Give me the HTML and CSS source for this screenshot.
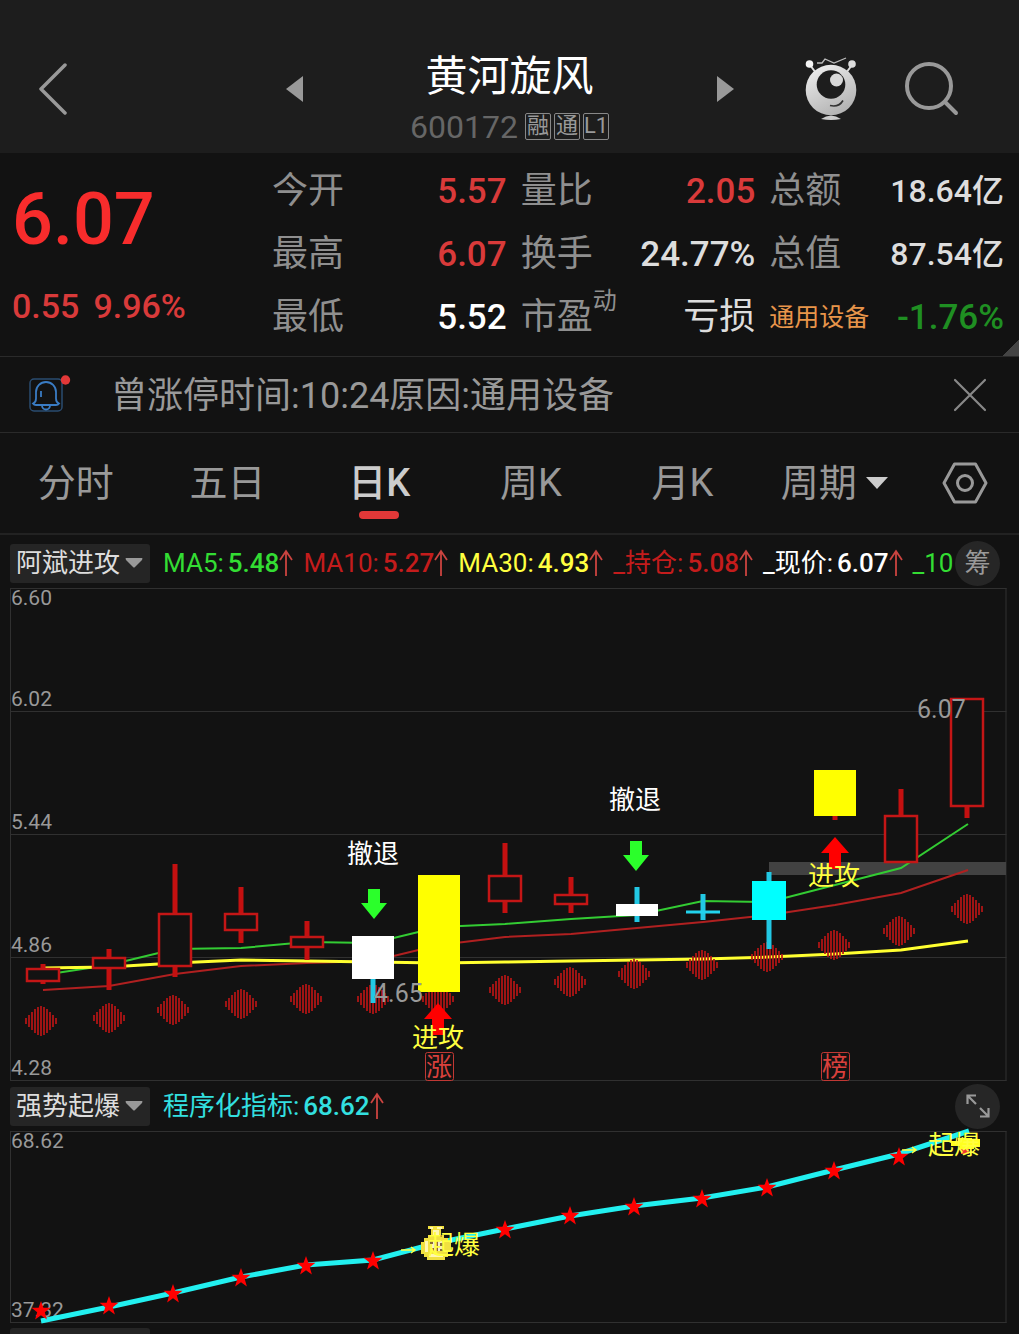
FILE: index.html
```
<!doctype html>
<html lang="zh-CN">
<head>

  <meta charset="utf-8">
  <meta name="viewport" content="width=device-width, initial-scale=1">

  <title>黄河旋风 600172</title>

  <link rel="stylesheet" href="styles.css">

</head>
<body>

  <header class="topbar">
    <button class="icon-btn back" aria-label="返回">
      <svg width="30" height="52" viewBox="0 0 30 52"><path d="M27 2 3 26 27 50" fill="none" stroke="#999" stroke-width="3.5" stroke-linecap="round" stroke-linejoin="round"/></svg>
    </button>
    <div class="stock">
      <button class="icon-btn" aria-label="上一只">
        <svg width="18" height="28" viewBox="0 0 18 28"><path d="M0 14 17 1V27z" fill="#999"/></svg>
      </button>
      <div class="stock-name">
        <h1>黄河旋风</h1>
        <p><span class="code">600172</span><span class="tag">融</span><span class="tag">通</span><span class="tag">L1</span></p>
      </div>
      <button class="icon-btn" aria-label="下一只">
        <svg width="18" height="28" viewBox="0 0 18 28"><path d="M18 14 1 1V27z" fill="#999"/></svg>
      </button>
    </div>
    <div class="tools">
      <button class="icon-btn" aria-label="助手">
        <svg width="52" height="66" viewBox="0 0 52 66">
          <defs>
            <linearGradient id="face" x1="0" y1="0" x2="0.5" y2="1">
              <stop offset="0" stop-color="#f2f2f2"/>
              <stop offset="1" stop-color="#b5b5b5"/>
            </linearGradient>
          </defs>
          <path d="M5 9 11 17M47 9 41 17" stroke="#ddd" stroke-width="2"/>
          <circle cx="4.5" cy="8" r="3.8" fill="#f4f4f4"/>
          <circle cx="47" cy="8" r="3.8" fill="#ddd"/>
          <path d="M12 7h5l3-4 9 4 12-5" fill="none" stroke="#bbb" stroke-width="1.3"/>
          <circle cx="26" cy="34" r="25.3" fill="url(#face)"/>
          <circle cx="26" cy="28.5" r="14.3" fill="#1d1d1d"/>
          <circle cx="31.5" cy="24" r="6.5" fill="#d8d8d8"/>
          <path d="M25 49.5q9 2 13-5" fill="none" stroke="#333" stroke-width="1.6"/>
          <path d="M16 63q10-7 20 0-10 2-20 0z" fill="#ccc"/>
        </svg>
      </button>
      <button class="icon-btn" aria-label="搜索">
        <svg width="54" height="54" viewBox="0 0 54 54"><circle cx="24" cy="24" r="22" fill="none" stroke="#999" stroke-width="4"/><path d="M40 40 51 51" stroke="#999" stroke-width="4" stroke-linecap="round"/></svg>
      </button>
    </div>
  </header>

  <section class="quote">
    <div class="price">
      <strong>6.07</strong>
      <p><span>0.55</span><span>9.96%</span></p>
    </div>
    <dl>
      <div><dt>今开</dt><dd class="up">5.57</dd></div>
      <div><dt>最高</dt><dd class="up">6.07</dd></div>
      <div><dt>最低</dt><dd class="white">5.52</dd></div>
    </dl>
    <dl>
      <div><dt>量比</dt><dd class="up">2.05</dd></div>
      <div><dt>换手</dt><dd>24.77%</dd></div>
      <div><dt>市盈<sup>动</sup></dt><dd class="loss">亏损</dd></div>
    </dl>
    <dl>
      <div><dt>总额</dt><dd class="amount">18.64亿</dd></div>
      <div><dt>总值</dt><dd class="amount">87.54亿</dd></div>
      <div><dt class="sector">通用设备</dt><dd class="down">-1.76%</dd></div>
    </dl>
  </section>

  <section class="notice">
    <svg width="42" height="42" viewBox="0 0 42 42">
      <rect x="1" y="5" width="32" height="32" rx="4" fill="none" stroke="#2a4c70" stroke-width="1.5"/>
      <path d="M4 29.5q3-1 3-5V18a10 10 0 0 1 20 0v6.5q0 4 3 5-1 1.5-3 1.5H7q-2 0-3-1.5zM13 31.5a4 4 0 0 0 8 0M12 17v6" fill="none" stroke="#3a7cc4" stroke-width="1.8"/>
      <circle cx="36.5" cy="6" r="4.7" fill="#e23838"/>
    </svg>
    <p>曾涨停时间:10:24原因:通用设备</p>
    <button class="icon-btn" aria-label="关闭">
      <svg width="34" height="34" viewBox="0 0 34 34"><path d="M2 2 32 32M32 2 2 32" stroke="#888" stroke-width="2.2" stroke-linecap="round"/></svg>
    </button>
  </section>

  <nav class="tabs">
    <a href="#">分时</a>
    <a href="#">五日</a>
    <a href="#" class="active">日K</a>
    <a href="#">周K</a>
    <a href="#">月K</a>
    <label class="period">
      <select aria-label="周期"><option>周期</option></select>
      <svg width="22" height="12" viewBox="0 0 22 12"><path d="M0 0H22L11 12z" fill="#ccc"/></svg>
    </label>
    <button class="icon-btn" aria-label="设置">
      <svg width="46" height="42" viewBox="0 0 46 42"><path d="M12.5 2h21L44 21 33.5 40h-21L2 21z" fill="none" stroke="#999" stroke-width="3" stroke-linejoin="round"/><circle cx="23" cy="21" r="7.5" fill="none" stroke="#999" stroke-width="3"/></svg>
    </button>
  </nav>

  <svg class="defs" width="0" height="0">
    <symbol id="rise" viewBox="0 0 14 28"><path d="M7 27V2M1 11 7 2 13 11" fill="none" stroke="#cc4440" stroke-width="1.8"/></symbol>
    <symbol id="caret" viewBox="0 0 18 12"><path d="M1 1H17Q18 1 17 3L10 10Q9 11 8 10L1 3Q0 1 1 1z" fill="#999"/></symbol>
  </svg>

  <section class="panel main-panel">
    <div class="panel-head">
      <label class="picker">
        <select aria-label="主图指标"><option>阿斌进攻</option></select>
        <svg width="18" height="12"><use href="#caret"/></svg>
      </label>
      <ul class="values">
        <li class="lime"><span>MA5:</span><b>5.48</b><svg width="14" height="28"><use href="#rise"/></svg></li>
        <li class="red"><span>MA10:</span><b>5.27</b><svg width="14" height="28"><use href="#rise"/></svg></li>
        <li class="yellow"><span>MA30:</span><b>4.93</b><svg width="14" height="28"><use href="#rise"/></svg></li>
        <li class="red"><span>_持仓:</span><b>5.08</b><svg width="14" height="28"><use href="#rise"/></svg></li>
        <li class="white"><span>_现价:</span><b>6.07</b><svg width="14" height="28"><use href="#rise"/></svg></li>
        <li class="lime"><span>_10</span></li>
      </ul>
      <button class="round">筹</button>
    </div>

    <svg class="chart" viewBox="0 588 1019 493">
      <defs>
        <path id="diamond" d="M-15-3V3M-12-6V6M-9-9V9M-6-12V12M-3-14V14M0-15V15M3-14V14M6-12V12M9-9V9M12-6V6M15-3V3"/>
        <path id="arrow-down" d="M-6-15H6V-1H13L0 15-13-1H-6z" fill="#2bff2b"/>
        <path id="arrow-up" d="M0-16 14 0H6V16H-6V0H-14z" fill="#f00"/>
      </defs>

      <path class="grid" d="M10.5 588.5H1006.5M10.5 711.5H1006.5M10.5 834.5H1006.5M10.5 957.5H1006.5M10.5 1080.5H1006.5M10.5 588V1081M1006 588V1081"/>
      <rect x="769" y="862" width="237" height="13" fill="#424242"/>

      <!-- moving averages -->
      <polyline class="ma5" points="43,975 109,965 175,949 241,948 307,942 373,943 439,927 505,924 571,919 637,915 703,901 769,902 835,885 901,868 968,824"/>
      <polyline class="ma10" points="43,990 109,986 175,974 241,966 307,963 373,961 439,945 505,937 571,934 637,928 703,922 769,915 835,905 901,893 968,870"/>
      <polyline class="ma30" points="43,968 109,967 175,963 241,960 307,961 373,962 439,963 505,962 571,961 637,960 703,959 769,957 835,954 901,950 968,941"/>

      <g class="diamonds">
        <use href="#diamond" x="41" y="1021"/>
        <use href="#diamond" x="109" y="1018"/>
        <use href="#diamond" x="173" y="1010"/>
        <use href="#diamond" x="241" y="1004"/>
        <use href="#diamond" x="306" y="999"/>
        <use href="#diamond" x="373" y="999"/>
        <use href="#diamond" x="438" y="999"/>
        <use href="#diamond" x="505" y="990"/>
        <use href="#diamond" x="570" y="982"/>
        <use href="#diamond" x="634" y="974"/>
        <use href="#diamond" x="702" y="965"/>
        <use href="#diamond" x="767" y="957"/>
        <use href="#diamond" x="834" y="945"/>
        <use href="#diamond" x="899" y="931"/>
        <use href="#diamond" x="967" y="909"/>
      </g>

      <!-- candles -->
      <path class="wick" d="M43 964V984M109 949V990M175 864V977M241 887V943M307 921V960M505 843V913M571 877V913M835 815V820M901 789V816M967 805V818"/>
      <g class="hollow">
        <rect x="27" y="969" width="32" height="12"/>
        <rect x="93" y="958" width="32" height="10"/>
        <rect x="159" y="914" width="32" height="52"/>
        <rect x="225" y="914" width="32" height="16"/>
        <rect x="291" y="937" width="32" height="10"/>
        <rect x="489" y="876" width="32" height="25"/>
        <rect x="555" y="895" width="32" height="9"/>
        <rect x="885" y="816" width="32" height="46"/>
        <rect x="951" y="699" width="32" height="107"/>
      </g>
      <path class="wick cyan" d="M373 979V1003M637 887V922M703 894V920M769 872V949"/>
      <path d="M686 912H720" stroke="#22d3ee" stroke-width="3"/>
      <rect x="752" y="881" width="34" height="39" fill="#0ff"/>
      <rect x="352" y="936" width="42" height="43" fill="#fff"/>
      <rect x="616" y="904" width="42" height="12" fill="#fff"/>
      <rect x="418" y="875" width="42" height="117" fill="#ff0"/>
      <rect x="814" y="770" width="42" height="46" fill="#ff0"/>

      <!-- signals -->
      <use href="#arrow-down" x="374" y="904"/>
      <use href="#arrow-down" x="636" y="856"/>
      <use href="#arrow-up" x="438" y="1019"/>
      <use href="#arrow-up" x="835" y="853"/>
      <g class="signal" text-anchor="middle">
        <text x="373" y="863" fill="#fff">撤退</text>
        <text x="635" y="809" fill="#fff">撤退</text>
        <text x="438" y="1047" fill="#ffff40">进攻</text>
        <text x="834" y="885" fill="#ffff40">进攻</text>
        <text x="439" y="1076" fill="#d9403c">涨</text>
        <text x="835" y="1076" fill="#d9403c">榜</text>
      </g>
      <rect class="badge" x="425.5" y="1052.5" width="28" height="28" rx="2"/>
      <rect class="badge" x="821.5" y="1052.5" width="28" height="28" rx="2"/>

      <g class="axis">
        <text x="11" y="605">6.60</text>
        <text x="11" y="706">6.02</text>
        <text x="11" y="829">5.44</text>
        <text x="11" y="952">4.86</text>
        <text x="11" y="1075">4.28</text>
      </g>
      <g class="extreme">
        <text x="374" y="1002">4.65</text>
        <text x="917" y="718">6.07</text>
      </g>
    </svg>
  </section>

  <section class="panel">
    <div class="panel-head">
      <label class="picker">
        <select aria-label="副图指标"><option>强势起爆</option></select>
        <svg width="18" height="12"><use href="#caret"/></svg>
      </label>
      <ul class="values">
        <li class="aqua"><span>程序化指标:</span><b>68.62</b><svg width="14" height="28"><use href="#rise"/></svg></li>
      </ul>
      <button class="round" aria-label="全屏">
        <svg width="24" height="24" viewBox="0 0 24 24"><path d="M1.5 10V1.5H10M1.5 1.5 10 10M22.5 14V22.5H14M22.5 22.5 14 14" fill="none" stroke="#999" stroke-width="2.2"/></svg>
      </button>
    </div>

    <svg class="chart" viewBox="0 1131 1019 192">
      <defs>
        <path id="star" d="M0-10 2.4-3.2H9.5L3.8 1.2 5.9 8.5 0 4.2-5.9 8.5-3.8 1.2-9.5-3.2H-2.4z" fill="#f00"/>
        <g id="bag" shape-rendering="crispEdges">
          <path d="M-8-19H8V-16H5V-10H8V-7H12V-4H15V7H12V12H9V15H-9V12H-12V9H-15V-3H-12V-7H-8V-10H-5V-16H-8z" fill="#f0e040"/>
          <path d="M-6-18H-3V-16H-6zM1-18H6V-16H1zM-3-15H3V-10H-3zM-11-4H-8V7H-11zM-7 9H7V12H-7z" fill="#fff7b0"/>
          <path d="M-5-10H6V-8H-5z" fill="#b09428"/>
          <path d="M-6-4H7V6H-6z" fill="#f4ecc8"/>
          <path d="M-6-4H-3V-1H-6zM0-4H2V6H0zM4-2H7V1H4zM-5 3H-2V6H-5zM4 4H7V6H4z" fill="#8a6a38"/>
        </g>
      </defs>

      <path class="grid" d="M10.5 1131.5H1006.5M10.5 1322.5H1006.5M10.5 1131V1323M1006 1131V1323"/>
      <g class="axis">
        <text x="11" y="1148">68.62</text>
        <text x="11" y="1317">37.32</text>
      </g>
      <polyline class="power" points="41,1321 109,1307 173,1293 241,1277 306,1265 373,1260 437,1243 505,1229 570,1216 634,1206 702,1198 767,1187 834,1170 899,1154 969,1131"/>

      <use href="#star" x="41" y="1311"/>
      <use href="#star" x="109" y="1306"/>
      <use href="#star" x="173" y="1294"/>
      <use href="#star" x="241" y="1278"/>
      <use href="#star" x="306" y="1266"/>
      <use href="#star" x="373" y="1261"/>
      <use href="#star" x="505" y="1230"/>
      <use href="#star" x="570" y="1216"/>
      <use href="#star" x="634" y="1207"/>
      <use href="#star" x="702" y="1199"/>
      <use href="#star" x="767" y="1188"/>
      <use href="#star" x="834" y="1171"/>
      <use href="#star" x="899" y="1157"/>

      <use href="#bag" x="436" y="1245"/>
      <path d="M951 1141H958V1138H972V1139H980V1147H974V1149H960V1146H951z" fill="#ffff20"/>
      <path d="M961 1149H969V1154H961z" fill="#e33"/>
      <path d="M401 1250H415M411 1247 415 1250 411 1253M902 1150H916M912 1147 916 1150 912 1153" fill="none" stroke="#ffff40" stroke-width="1.5"/>
      <g class="signal" fill="#ffff40">
        <text x="428" y="1254">起爆</text>
        <text x="928" y="1154">起爆</text>
      </g>
    </svg>
  </section>

  <div class="next-panel"></div>

</body>
</html>
```
FILE: styles.css
```
* {
  box-sizing: border-box;
}

html, body {
  height: 100%;
}

body {
  margin: 0;
  overflow: hidden;
  background-color: #121212;
  color: #999;
  font-family: Roboto, "Noto Sans CJK SC", sans-serif;
}

h1, p, dl, dd, ul {
  margin: 0;
  padding: 0;
}

svg {
  display: block;
  flex: none;
}

.defs {
  position: absolute;
}

button, select {
  margin: 0;
  padding: 0;
  border: none;
  background: none;
  color: inherit;
  font: inherit;
  appearance: none;
}

.icon-btn {
  display: flex;
  align-items: center;
  justify-content: center;
}

/* top bar */

.topbar {
  display: grid;
  grid-template-columns: 1fr 448px 1fr;
  align-items: center;
  height: 153px;
  padding-top: 24px;
  background-color: #1d1d1d;
}

.back {
  justify-self: start;
  margin-left: 38px;
}

.stock {
  display: flex;
  align-items: center;
  justify-content: space-between;
}

.stock-name {
  padding-top: 20px;
  text-align: center;
}

.stock-name h1 {
  color: #fff;
  font-size: 42px;
  font-weight: 400;
  line-height: 56px;
}

.stock-name p {
  display: flex;
  align-items: center;
  justify-content: center;
  gap: 3px;
  height: 44px;
}

.code {
  margin-right: 4px;
  color: #666;
  font-size: 32px;
}

.tag {
  width: 26px;
  height: 27px;
  border: 1px solid #888;
  border-radius: 2px;
  font-size: 22px;
  line-height: 24px;
}

.tools {
  display: flex;
  align-items: center;
  justify-content: flex-end;
  gap: 48px;
  padding-right: 60px;
}

/* quote */

.quote {
  display: grid;
  grid-template-columns: 246px 1fr 1fr 1fr;
  column-gap: 14px;
  padding: 7px 15px 7px 12px;
  border-bottom: 1px solid #2a2a2a;
  background: linear-gradient(135deg, transparent 50%, #444 50%) right bottom / 16px 16px no-repeat;
}

.price strong {
  display: block;
  padding-top: 16px;
  color: #f82c2c;
  font-size: 72px;
  font-weight: 500;
  line-height: 88px;
}

.price p {
  display: flex;
  gap: 14px;
  padding-top: 18px;
  color: #d93a3a;
  font-size: 34px;
  font-weight: 500;
  line-height: 48px;
}

.quote dl > div {
  display: flex;
  align-items: center;
  justify-content: space-between;
  height: 63px;
  font-size: 36px;
  line-height: 63px;
  white-space: nowrap;
}

.quote dt {
  color: #8f8f8f;
}

.quote sup {
  position: relative;
  bottom: 20px;
  font-size: 24px;
  line-height: 1;
  vertical-align: baseline;
}

.quote dd {
  color: #ddd;
  font-size: 35px;
  font-weight: 500;
}

.quote .amount {
  font-size: 32px;
}

.quote .loss {
  font-size: 36px;
  font-weight: 400;
}

.quote .white {
  color: #fff;
}

.quote .up {
  color: #d93a3a;
}

.quote .down {
  color: #1f8f22;
}

.quote .sector {
  color: #e8954a;
  font-size: 25px;
}

/* notice */

.notice {
  display: flex;
  align-items: center;
  height: 76px;
  padding: 0 32px 0 29px;
  border-bottom: 1px solid #2a2a2a;
}

.notice p {
  flex: 1;
  padding: 0 0 6px 40px;
  font-size: 36px;
}

/* period tabs */

.tabs {
  display: grid;
  grid-template-columns: repeat(6, 1fr) 109px;
  align-items: stretch;
  height: 102px;
  border-bottom: 2px solid #222;
  font-size: 38px;
  line-height: 100px;
}

.tabs a {
  position: relative;
  color: inherit;
  text-align: center;
  text-decoration: none;
}

.tabs .active {
  color: #ccc;
  font-weight: 500;
}

.tabs .active::after {
  content: "";
  position: absolute;
  left: 50%;
  bottom: 14px;
  width: 40px;
  height: 8px;
  margin-left: -20px;
  border-radius: 4px;
  background-color: #e23838;
}

.period {
  display: flex;
  align-items: center;
  justify-content: center;
  gap: 8px;
}

/* chart panels */

.main-panel {
  padding-top: 3px;
}

.panel-head {
  display: flex;
  align-items: center;
  height: 50px;
  padding: 0 19px 0 10px;
}

.picker {
  display: flex;
  flex: none;
  align-items: center;
  gap: 4px;
  width: 140px;
  height: 39px;
  padding-left: 6px;
  border-radius: 3px;
  background-color: #252525;
  color: #ddd;
  font-size: 26px;
}

.values {
  display: flex;
  flex: 1;
  gap: 10px;
  min-width: 0;
  overflow: hidden;
  padding-left: 13px;
  font-size: 26px;
  line-height: 40px;
  list-style: none;
  white-space: nowrap;
}

.values li {
  display: flex;
  flex: none;
  align-items: center;
}

.values b {
  margin-left: 4px;
  font-weight: 500;
}

.lime {
  color: #33dd33;
}

.red {
  color: #c41c1c;
}

.yellow {
  color: #ffff40;
}

.white {
  color: #fff;
}

.aqua {
  color: #33e0e0;
}

.round {
  display: flex;
  flex: none;
  align-items: center;
  justify-content: center;
  width: 45px;
  height: 45px;
  border-radius: 50%;
  background-color: #262626;
  font-size: 26px;
  line-height: 40px;
}

.chart {
  width: 100%;
  height: auto;
  overflow: visible;
}

.grid {
  fill: none;
  stroke: #303030;
}

.ma5, .ma10, .ma30, .power {
  fill: none;
  stroke-width: 2;
}

.ma5 {
  stroke: #33cc33;
}

.ma10 {
  stroke: #b02020;
}

.ma30 {
  stroke: #ffff30;
  stroke-width: 3;
}

.power {
  stroke: #22f0f0;
  stroke-width: 5;
}

.diamonds {
  stroke: #b81616;
  stroke-width: 1.7;
}

.wick {
  stroke: #c41010;
  stroke-width: 5;
}

.wick.cyan {
  stroke: #22c8e4;
}

.hollow {
  fill: #121212;
  stroke: #c41616;
  stroke-width: 2.5;
}

.signal {
  font-size: 26px;
}

.badge {
  fill: none;
  stroke: #c03834;
}

.axis {
  fill: #999;
  font-size: 21px;
}

.extreme {
  fill: #999;
  font-size: 25px;
}

.next-panel {
  width: 140px;
  height: 39px;
  margin: 5px 0 0 10px;
  border-radius: 3px;
  background-color: #252525;
}
```
